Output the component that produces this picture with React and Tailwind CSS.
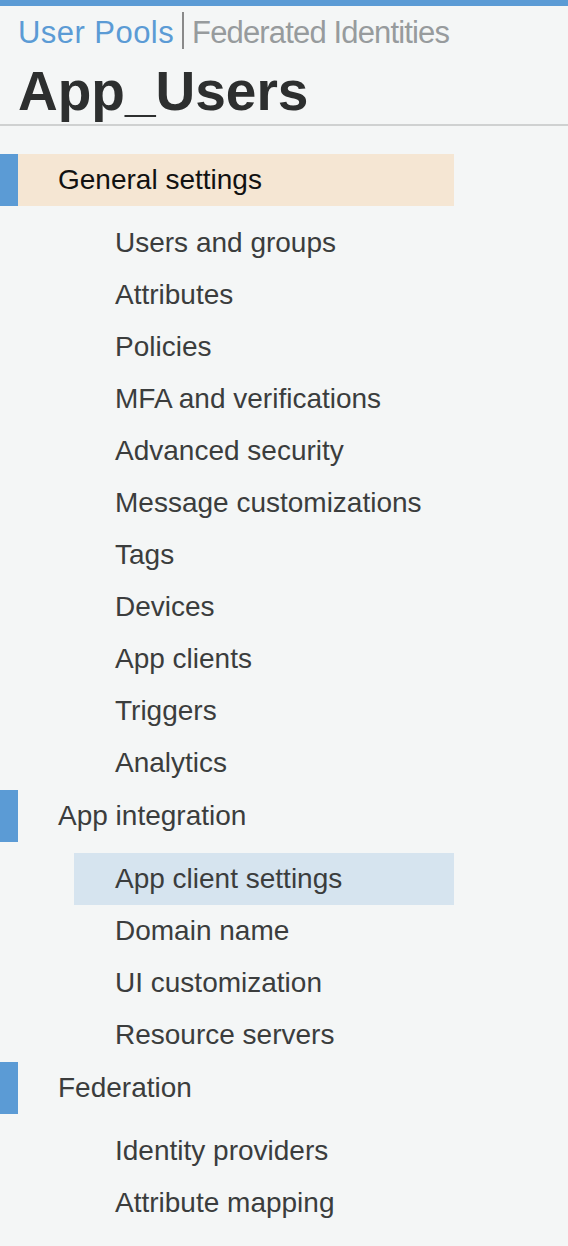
import React from 'react'

const sections = [
  {
    title: 'General settings',
    active: true,
    items: ['Users and groups', 'Attributes', 'Policies', 'MFA and verifications', 'Advanced security', 'Message customizations', 'Tags', 'Devices', 'App clients', 'Triggers', 'Analytics'],
  },
  {
    title: 'App integration',
    items: ['App client settings', 'Domain name', 'UI customization', 'Resource servers'],
    selected: 'App client settings',
  },
  {
    title: 'Federation',
    items: ['Identity providers', 'Attribute mapping'],
  },
]

export default function App() {
  return (
    <div className="min-h-[1246px] w-[568px] bg-[#f4f6f6] font-['Liberation_Sans',Arial,sans-serif]">
      <div className="h-[6px] bg-[#5b9bd5]" />
      <div className="pl-[18px] pt-[6px]">
        <div className="flex h-[37px] items-center text-[31px] leading-none">
          <span className="translate-y-[2px] tracking-[0.45px] text-[#5b9bd5]">User Pools</span>
          <span className="mx-[8px] h-[37px] w-[2px] bg-[#8a8a8a]" />
          <span className="translate-y-[2px] tracking-[-0.85px] text-[#979b9d]">Federated Identities</span>
        </div>
        <h1 className="mt-[12px] h-[60px] text-[55px] leading-[60px] font-bold text-[#2d2f2f]">App_Users</h1>
      </div>
      <div className="mt-[3px] h-[2px] bg-[#cfd1d1]" />
      <nav className="pt-[28px]">
        {sections.map(section => (
          <div key={section.title}>
            <div className="flex h-[52px] items-stretch">
              <div className="w-[18px] bg-[#5b9bd5]" />
              <div className={`flex w-[436px] items-center pl-[40px] text-[28px] ${section.active ? 'bg-[#f5e6d3] text-[#111]' : 'text-[#3b3d3d]'}`}>
                {section.title}
              </div>
            </div>
            <ul className="pt-[11px] pb-[1px]">
              {section.items.map(item => (
                <li key={item} className="flex h-[52px] items-center pl-[74px]">
                  <div className={`flex h-full w-[380px] items-center pl-[41px] text-[28px] text-[#3b3d3d] ${section.selected === item ? 'bg-[#d6e4ef]' : ''}`}>
                    {item}
                  </div>
                </li>
              ))}
            </ul>
          </div>
        ))}
      </nav>
    </div>
  )
}
